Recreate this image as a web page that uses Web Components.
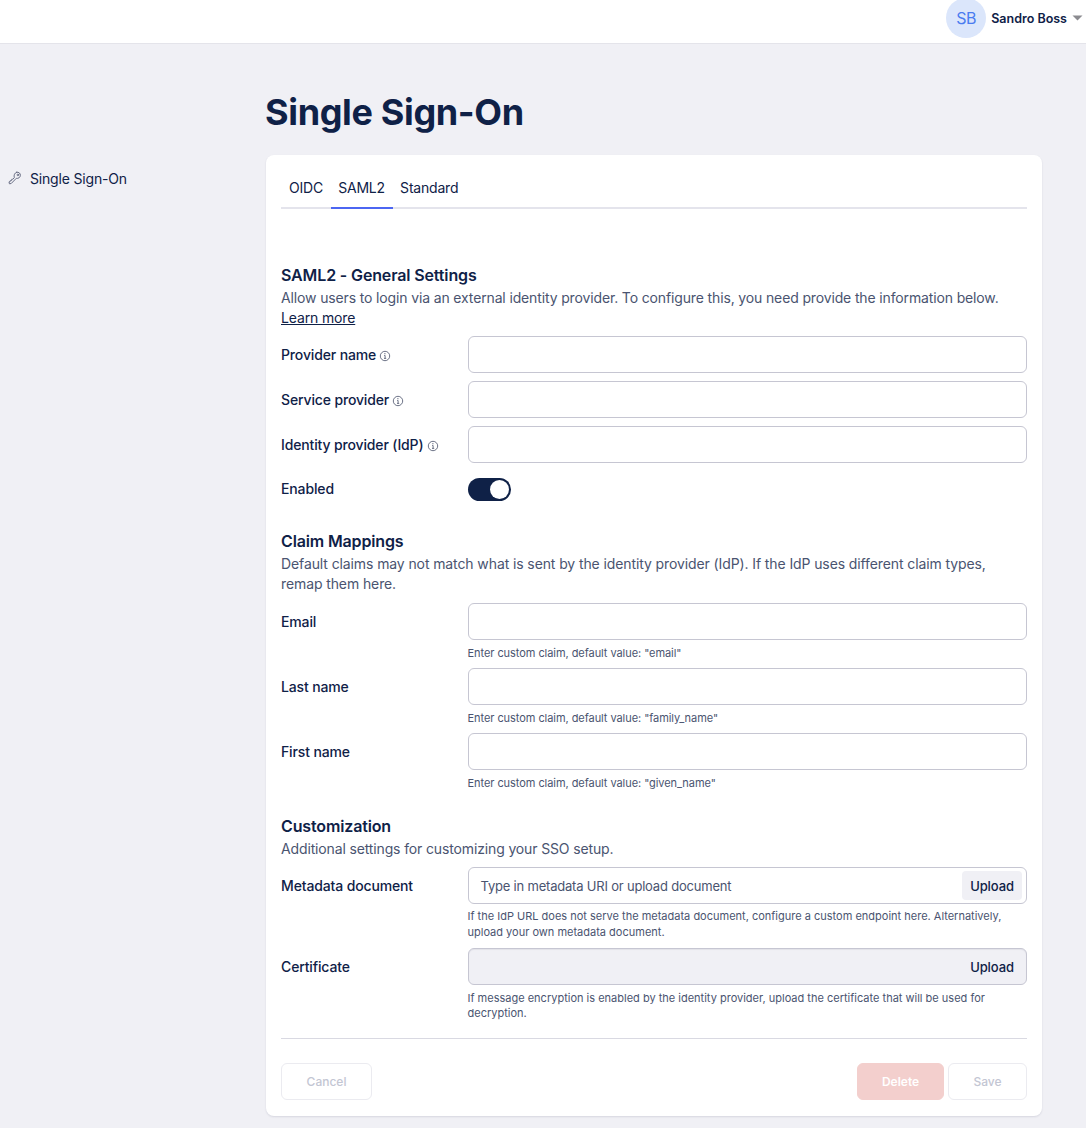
<!DOCTYPE html>
<html>
<head>
<meta charset="utf-8">
<title>Single Sign-On</title>
<style>
  html, body { margin: 0; background: #f0f0f5; }
  body { font-family: Inter, "Liberation Sans", sans-serif; color: #0f2147; height: 1128px; overflow: hidden; }
</style>
</head>
<body>
<sso-page></sso-page>

<script>
const fontStack = 'Inter, "Liberation Sans", sans-serif';

class TopBar extends HTMLElement {
  constructor() {
    super();
    this.attachShadow({ mode: 'open' });
    this.shadowRoot.innerHTML = `
      <style>
        :host { display: flex; justify-content: flex-end; align-items: center; height: 43px; background: #fff; border-bottom: 1px solid #e4e4ea; padding-right: 3px; gap: 5px; overflow: hidden; }
        .avatar { width: 40px; height: 40px; border-radius: 50%; background: #dbe6fb; color: #4a7cf0; font-size: 16px; letter-spacing: -0.3px; display: flex; align-items: center; justify-content: center; margin-top: -7px; }
        .name { font-size: 12.5px; font-weight: 600; color: #0f2147; margin-top: -7px; }
        svg { margin-top: -7px; }
      </style>
      <div class="avatar">SB</div>
      <div class="name">Sandro Boss</div>
      <svg width="11" height="6" viewBox="0 0 11 6"><path d="M0.5 0.5h10L5.5 5.5z" fill="#8b8b90"/></svg>`;
  }
}
customElements.define('top-bar', TopBar);

class SideNav extends HTMLElement {
  constructor() {
    super();
    this.attachShadow({ mode: 'open' });
    this.shadowRoot.innerHTML = `
      <style>
        :host { display: flex; width: 266px; flex: none; box-sizing: border-box; padding: 125px 0 0 8px; gap: 8px; font-size: 14px; color: #0f2147; align-items: flex-start; }
        svg { margin-top: 2px; }
        span { line-height: 20px; letter-spacing: -0.18px; }
      </style>
      <svg width="14" height="15" viewBox="0 0 14 15" fill="none" stroke="#6a6f85" stroke-width="1" stroke-linecap="round" stroke-linejoin="round">
        <path d="M8.7 1.2c2-.5 4 1.300 3.700 3.400-.3 1.900-2.200 3.200-4.100 2.700L3.200 12.500l-1.800.3-.4-1.900 1.100-.2.200-1.100 1.200-.1.200-1.200 1.100-.1L6.300 6.700C5.600 4.300 6.600 1.800 8.700 1.200z"/>
        <circle cx="9.900" cy="3.900" r=".8"/>
      </svg>
      <span><slot></slot></span>`;
  }
}
customElements.define('side-nav', SideNav);

class TabBar extends HTMLElement {
  constructor() {
    super();
    this.attachShadow({ mode: 'open' });
    const tabs = (this.getAttribute('tabs') || '').split(',');
    const active = this.getAttribute('active');
    this.shadowRoot.innerHTML = `
      <style>
        :host { display: flex; border-bottom: 2px solid #e4e4ec; height: 37px; padding-left: .4px; }
        div { box-sizing: border-box; height: 39px; padding: 8px 7.600px 0; font-size: 14px; line-height: 20px; letter-spacing: -0.2px; color: #0f2147; }
        div.on { border-bottom: 2px solid #4c66f2; }
      </style>
      ${tabs.map(t => `<div class="${t === active ? 'on' : ''}">${t}</div>`).join('')}`;
  }
}
customElements.define('tab-bar', TabBar);

class FormSection extends HTMLElement {
  constructor() {
    super();
    this.attachShadow({ mode: 'open' });
    this.shadowRoot.innerHTML = `
      <style>
        :host { display: block; }
        h2 { margin: 0; font-size: 16px; line-height: 23px; font-weight: 600; letter-spacing: -0.14px; color: #0f2147; }
        p { margin: var(--text-gap, 1px) 0 0; font-size: 14px; line-height: 20px; letter-spacing: -0.14px; color: #4a5470; }
        .fields { display: flex; flex-direction: column; }
      </style>
      <h2>${this.getAttribute('heading')}</h2>
      <p><slot name="text"></slot></p>
      <div class="fields"><slot></slot></div>`;
  }
}
customElements.define('form-section', FormSection);

class InfoDot extends HTMLElement {
  constructor() {
    super();
    this.attachShadow({ mode: 'open' });
    this.shadowRoot.innerHTML = `
      <style>:host { display: inline-flex; margin-left: -.5px; vertical-align: -2px; }</style>
      <svg width="12" height="12" viewBox="0 0 12 12" fill="none" stroke="#5c6379">
        <circle cx="6" cy="6" r="4.700" stroke-width=".9"/>
        <path d="M5.200 5.500H6.100V8.300M5 8.400H7.200" stroke-width=".9"/>
        <circle cx="5.900" cy="3.700" r=".6" fill="#5c6379" stroke="none"/>
      </svg>`;
  }
}
customElements.define('info-dot', InfoDot);

class FormField extends HTMLElement {
  constructor() {
    super();
    this.attachShadow({ mode: 'open' });
    const label = this.getAttribute('label');
    const info = this.hasAttribute('info');
    const hint = this.getAttribute('hint');
    const upload = this.hasAttribute('upload');
    const disabled = this.hasAttribute('disabled');
    const placeholder = this.getAttribute('placeholder') || '';
    this.shadowRoot.innerHTML = `
      <style>
        :host { display: grid; grid-template-columns: 186.500px 1fr; margin-top: var(--gap, 0); }
        .label { font-size: 14px; line-height: 20px; font-weight: 500; letter-spacing: -0.14px; color: #0f2147; padding-top: 9px; white-space: nowrap; }
        .box { box-sizing: border-box; height: 37px; border: 1px solid #c6c6d2; border-radius: 6px; background: #fff; display: flex; align-items: center; justify-content: space-between; padding-left: 12px; font-size: 13px; letter-spacing: -0.2px; color: #4a5470; }
        .box.off { background: #f0f0f5; box-shadow: inset 0 1px 1px rgba(40,40,70,.07); }
        .up { box-sizing: border-box; height: 29px; width: 60px; margin-right: 4px; border-radius: 4px; background: #f0f0f5; font-size: 13px; font-weight: 500; letter-spacing: -0.1px; color: #0f2147; display: flex; align-items: center; justify-content: center; }
        .off .up { background: none; }
        .hint { margin-top: var(--hint-gap, 6px); font-size: 11px; line-height: 15.500px; letter-spacing: var(--hint-spacing, -0.06px); color: #4a5470; }
        .hint:empty { display: none; }
      </style>
      <div class="label">${label}${info ? ' <info-dot></info-dot>' : ''}</div>
      <div>
        <div class="box ${disabled ? 'off' : ''}"><span>${placeholder}</span>${upload ? '<div class="up">Upload</div>' : ''}</div>
        <div class="hint">${hint || ''}</div>
      </div>`;
  }
}
customElements.define('form-field', FormField);

class ToggleField extends HTMLElement {
  constructor() {
    super();
    this.attachShadow({ mode: 'open' });
    this.shadowRoot.innerHTML = `
      <style>
        :host { display: grid; grid-template-columns: 187px 1fr; align-items: center; height: 24px; margin-top: var(--gap, 0); }
        .label { font-size: 14px; font-weight: 500; letter-spacing: -0.14px; color: #0f2147; padding-bottom: 2px; }
        .track { box-sizing: border-box; width: 43px; height: 23px; border-radius: 12px; background: #0f2147; padding: 2px; display: flex; justify-content: flex-end; }
        .knob { width: 19px; height: 19px; border-radius: 50%; background: #fff; }
      </style>
      <div class="label">${this.getAttribute('label')}</div>
      <div class="track"><div class="knob"></div></div>`;
  }
}
customElements.define('toggle-field', ToggleField);

class ActionButton extends HTMLElement {
  constructor() {
    super();
    this.attachShadow({ mode: 'open' });
    this.shadowRoot.innerHTML = `
      <style>
        :host { display: flex; box-sizing: border-box; height: 37px; border: 1px solid #ebebf0; border-radius: 6px; align-items: center; justify-content: center; font-size: 12px; font-weight: 500; color: #c3c6d3; background: #fff; }
        :host([danger]) { background: #f3cfcd; border-color: #f3cfcd; color: #fff; font-weight: 600; }
      </style>
      <slot></slot>`;
  }
}
customElements.define('action-button', ActionButton);

class SsoCard extends HTMLElement {
  constructor() {
    super();
    this.attachShadow({ mode: 'open' });
    this.shadowRoot.innerHTML = `
      <style>
        :host { display: block; width: 776px; height: 961px; box-sizing: border-box; background: #fff; border-radius: 8px; padding: 15px 15px 0; box-shadow: 0 1px 2px rgba(30,30,70,.12); }
        .body { padding-top: 55px; display: flex; flex-direction: column; }
        .foot { display: flex; gap: 4px; margin-top: 16.500px; border-top: 1px solid #d9d9e2; padding-top: 24px; }
        .spacer { flex: 1; }
      </style>
      <tab-bar tabs="OIDC,SAML2,Standard" active="SAML2"></tab-bar>
      <div class="body"><slot></slot></div>
      <div class="foot">
        <action-button style="width:91px">Cancel</action-button>
        <div class="spacer"></div>
        <action-button danger style="width:87px">Delete</action-button>
        <action-button style="width:79px">Save</action-button>
      </div>`;
  }
}
customElements.define('sso-card', SsoCard);

class SsoPage extends HTMLElement {
  constructor() {
    super();
    this.attachShadow({ mode: 'open' });
    this.shadowRoot.innerHTML = `
      <style>
        :host { display: block; font-family: ${fontStack}; color: #0f2147; }
        .main { display: flex; }
        h1 { margin: 0 0 0 -1px; padding-top: 46px; font-size: 36px; line-height: 44px; font-weight: 700; height: 65px; color: #0f2147; letter-spacing: -0.35px; }
        a { color: #0f2147; text-decoration: underline; }
      </style>
      <top-bar></top-bar>
      <div class="main">
        <side-nav>Single Sign-On</side-nav>
        <div>
          <h1>Single Sign-On</h1>
          <sso-card>
            <form-section heading="SAML2 - General Settings">
              <span slot="text">Allow users to login via an external identity provider. To configure this, you need provide the information below. <a href="#">Learn more</a></span>
              <form-field label="Provider name" info style="--gap:8px"></form-field>
              <form-field label="Service provider" info style="--gap:8px"></form-field>
              <form-field label="Identity provider (IdP)" info style="--gap:8px"></form-field>
              <toggle-field label="Enabled" style="--gap:14px"></toggle-field>
            </form-section>
            <form-section heading="Claim Mappings" style="margin-top:29px">
              <span slot="text" style="letter-spacing:-0.105px">Default claims may not match what is sent by the identity provider (IdP). If the IdP uses different claim types,<br>remap them here.</span>
              <form-field label="Email" hint="Enter custom claim, default value: &quot;email&quot;" style="--gap:9px"></form-field>
              <form-field label="Last name" hint="Enter custom claim, default value: &quot;family_name&quot;" style="--gap:6.500px"></form-field>
              <form-field label="First name" hint="Enter custom claim, default value: &quot;given_name&quot;" style="--gap:6.500px"></form-field>
            </form-section>
            <form-section heading="Customization" style="margin-top:23.500px;--text-gap:.5px;--hint-spacing:0px">
              <span slot="text">Additional settings for customizing your SSO setup.</span>
              <form-field label="Metadata document" upload placeholder="Type in metadata URI or upload document" hint="If the IdP URL does not serve the metadata document, configure a custom endpoint here. Alternatively, upload your own metadata document." style="--gap:8.500px;--hint-gap:5px"></form-field>
              <form-field label="Certificate" upload disabled hint="If message encryption is enabled by the identity provider, upload the certificate that will be used for decryption." style="--gap:8px;--hint-gap:5.500px"></form-field>
            </form-section>
          </sso-card>
        </div>
      </div>`;
  }
}
customElements.define('sso-page', SsoPage);
</script>
</body>
</html>
